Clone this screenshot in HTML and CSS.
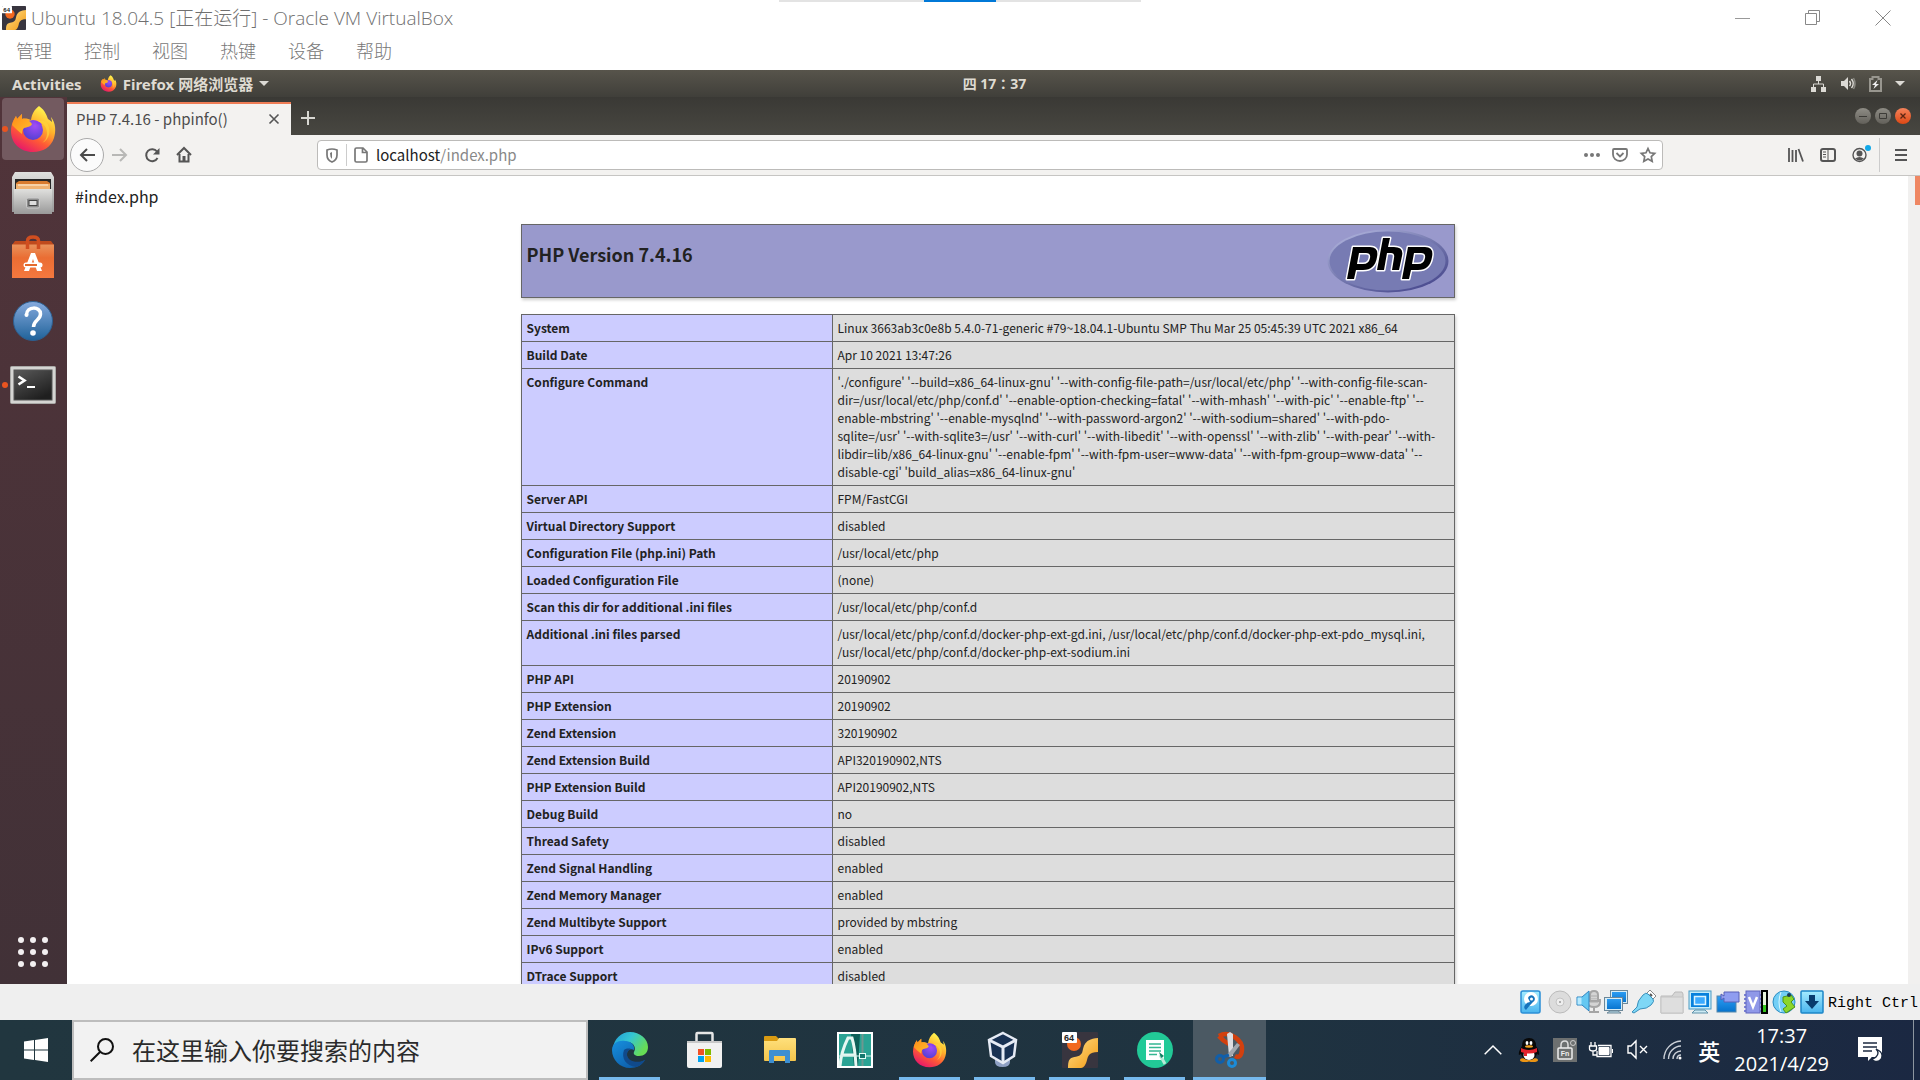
FILE: index.html
```html
<!DOCTYPE html>
<html lang="zh-CN">
<head>
<meta charset="utf-8">
<title>Ubuntu 18.04.5 [正在运行] - Oracle VM VirtualBox</title>
<link rel="stylesheet" href="styles.css">
</head>
<body>
<svg class="defs" width="0" height="0" aria-hidden="true">
  <defs>
    <linearGradient id="foxBody" x1="0.8" y1="0.1" x2="0.3" y2="1"><stop offset="0" stop-color="#fff44f"/><stop offset="0.35" stop-color="#ffb02b"/><stop offset="0.65" stop-color="#ff5a35"/><stop offset="1" stop-color="#e6176b"/></linearGradient>
    <linearGradient id="foxHead" x1="0" y1="0" x2="1" y2="1"><stop offset="0" stop-color="#ff8a16"/><stop offset="1" stop-color="#ffc02e"/></linearGradient>
    <radialGradient id="foxGlobe" cx="0.6" cy="0.3" r="0.8"><stop offset="0" stop-color="#a24cf5"/><stop offset="1" stop-color="#4a3fd0"/></radialGradient>
    <linearGradient id="metal" x1="0" y1="0" x2="0" y2="1"><stop offset="0" stop-color="#e0e0de"/><stop offset="1" stop-color="#999"/></linearGradient>
    <linearGradient id="bag" x1="0" y1="0" x2="0" y2="1"><stop offset="0" stop-color="#e9935c"/><stop offset="0.4" stop-color="#ea6d33"/><stop offset="1" stop-color="#f4783f"/></linearGradient>
    <linearGradient id="help" x1="0" y1="0" x2="0" y2="1"><stop offset="0" stop-color="#86aade"/><stop offset="1" stop-color="#1f6299"/></linearGradient>
    <linearGradient id="term" x1="0" y1="0" x2="0.6" y2="1"><stop offset="0" stop-color="#5a5a5a"/><stop offset="1" stop-color="#1f1f1f"/></linearGradient>
    <linearGradient id="blueScreen" x1="0" y1="0" x2="0" y2="1"><stop offset="0" stop-color="#2e9ff5"/><stop offset="1" stop-color="#0672cc"/></linearGradient>
    <linearGradient id="skyBox" x1="0" y1="0" x2="0" y2="1"><stop offset="0" stop-color="#a5ecff"/><stop offset="1" stop-color="#49b4ee"/></linearGradient>
    <linearGradient id="pipe" x1="0" y1="0" x2="1" y2="1"><stop offset="0" stop-color="#ffe08a"/><stop offset="1" stop-color="#f39a12"/></linearGradient>
    <linearGradient id="edgeTop" x1="0" y1="0" x2="1" y2="0.5"><stop offset="0" stop-color="#1f9ad8"/><stop offset="0.5" stop-color="#35c6d2"/><stop offset="1" stop-color="#67dd55"/></linearGradient>
    <linearGradient id="edgeBody" x1="0" y1="0" x2="0.8" y2="1"><stop offset="0" stop-color="#1790df"/><stop offset="1" stop-color="#0c59a4"/></linearGradient>
    <linearGradient id="folder" x1="0" y1="0" x2="0" y2="1"><stop offset="0" stop-color="#ffe07c"/><stop offset="1" stop-color="#f4c54b"/></linearGradient>
    <linearGradient id="phpRim" x1="0.1" y1="0" x2="0.9" y2="1"><stop offset="0" stop-color="#b4b8e0"/><stop offset="0.5" stop-color="#7377ad"/><stop offset="1" stop-color="#43438a"/></linearGradient>
    <symbol id="firefox" viewBox="0 0 46 48">
      <path d="M29 1c7 5 8 11 9 13c2 1 4 3 4 3c0-2-1-4-1-5c5 6 5 15 3 21c-3 9-11 14-21 14C10 47 1 38 1 26c0-7 3-12 5-15l1 3l5-5l0 5c3-1 7 0 9 1c1-6 3-10 8-14z" fill="url(#foxBody)"/>
      <path d="M27 17c7 0 10 6 10 11c0 5-2 8-5 10c8-3 10-15 4-21c-3-2-6-2-9 0z" fill="#ffd43b" opacity="0.7"/>
      <circle cx="23" cy="25" r="10" fill="url(#foxGlobe)"/>
      <path d="M2 20c1-4 3-7 4-9l1 3l5-5v5c4-1 7 1 10 5c-1 3-5 3-8 4c-2 2-2 4-2 6c-4-3-7-6-10-9z" fill="url(#foxHead)"/>
      <path d="M22 16c4-1 9 1 10 4l-5-1c-1-2-3-3-5-3z" fill="#8b3df0"/>
    </symbol>
    <symbol id="vm64" viewBox="0 0 36 36">
      <rect width="36" height="36" rx="1" fill="#38353f"/>
      <circle cx="12" cy="12" r="7" fill="#f2691f"/>
      <path d="M36 6v14c-9 0-10 4-11 8c-1 4-3 8-6 8H6c0-3 0-7 2-9c3-3 9-1 12-6c2-4 0-14 16-15z" fill="url(#pipe)"/>
      <rect x="0" y="0" width="15" height="11" rx="1" fill="#fff"/>
      <text x="7" y="9" font-size="9" font-weight="700" text-anchor="middle" fill="#222" font-family="Liberation Sans, sans-serif">64</text>
    </symbol>
    <g id="phpWord">
      <path fill-rule="evenodd" d="M25 18h17q9 0 7 10q-2 13-14 13h-7l-2 9h-7zM31 24l-2 11h6q6 0 7-6q1-5-4-5z"/>
      <path d="M55 9h7l-2 9h6q10 0 8 9l-3 14h-7l2-12q1-5-3-5h-4l-3 17h-7z"/>
      <path fill-rule="evenodd" d="M80 18h17q9 0 7 10q-2 13-14 13h-7l-2 9h-7zM86 24l-2 11h6q6 0 7-6q1-5-4-5z"/>
    </g>
  </defs>
</svg>

<div class="screen">
  <header class="vm-title">
    <svg class="vm-logo" viewBox="0 0 36 36"><use href="#vm64"/></svg>
    <h1 class="vm-name">Ubuntu 18.04.5 [正在运行] - Oracle VM VirtualBox</h1>
    <div class="vm-pin"><i></i><b></b><i></i></div>
    <div class="vm-controls">
      <button aria-label="最小化"><svg width="16" height="16"><path d="M0 8.500h15" stroke="#999" fill="none"/></svg></button>
      <button aria-label="还原"><svg width="16" height="16"><path d="M.5 3.500h11v11H.5zM3.500 3V.5h11v11H12" stroke="#888" fill="none"/></svg></button>
      <button aria-label="关闭"><svg width="16" height="16"><path d="M.5.5l15 15M15.500.5l-15 15" stroke="#888" fill="none"/></svg></button>
    </div>
  </header>
  <nav class="vm-menu">
    <button>管理</button><button>控制</button><button>视图</button><button>热键</button><button>设备</button><button>帮助</button>
  </nav>

  <div class="panel">
    <div class="panel-left">
      <button class="activities">Activities</button>
      <button class="app-menu"><svg width="17" height="17"><use href="#firefox"/></svg><span>Firefox 网络浏览器</span><svg width="10" height="6"><path d="M0 0h10L5 5z" fill="#dcdad5"/></svg></button>
    </div>
    <time class="panel-clock" lang="zh-TW">四 17：37</time>
    <div class="panel-right">
      <svg width="16" height="16" fill="#dcdad5"><path d="M5 0h5v5H5zM0 11h5v5H0zM10 11h5v5h-5z"/><path d="M7.500 5v3M2.500 11V8h10v3" stroke="#dcdad5" fill="none"/></svg>
      <svg width="16" height="16" fill="none"><path d="M1 5h3l4-4v13l-4-4H1z" fill="#dcdad5"/><path d="M9.500 5q2 2.500 0 5M11.500 3q3.500 4.500 0 9" stroke="#dcdad5" stroke-width="1.500"/><path d="M13.500 2q3 5.500 0 11" stroke="#888780" stroke-width="1.500"/></svg>
      <svg width="13" height="16" fill="none"><path d="M1 3h2.500V1h6v2H12v12H1z" stroke="#98968f" stroke-width="2"/><path d="M8.500 4L3 9h3l-1.500 4L10 8H7z" fill="#eee"/></svg>
      <svg width="10" height="6"><path d="M0 0h10L5 5z" fill="#dcdad5"/></svg>
    </div>
  </div>

  <div class="guest">
    <aside class="dock">
      <button class="dock-item active running" aria-label="Firefox"><svg width="46" height="48"><use href="#firefox"/></svg></button>
      <button class="dock-item" aria-label="文件"><svg width="42" height="44" viewBox="0 0 42 44"><path d="M3 1h36l3 5v35H0V6z" fill="url(#metal)"/><path d="M3 8h36v10H3z" fill="#262626"/><path d="M4 12l3-2h28l3 2v6H4z" fill="#d97b2f"/><path d="M4 13h34v5H4z" fill="#f0b272"/><path d="M6 14h30" stroke="#fff0dc"/><path d="M2 18h38v25H2z" fill="url(#metal)"/><rect x="14.500" y="27" width="13" height="10" rx="1.500" fill="#8c8c8c" stroke="#ccc"/><rect x="17" y="29.500" width="8" height="5" fill="#ddd" stroke="#444"/></svg></button>
      <button class="dock-item" aria-label="软件"><svg width="42" height="44" viewBox="0 0 42 44"><path d="M0 10l3-4h36l3 4z" fill="#bf4a1d"/><path d="M0 9.500h42V43H0z" fill="url(#bag)"/><path d="M15.500 14V6q0-4 5.500-4t5.500 4v8" fill="none" stroke="#d04e20" stroke-width="3.500"/><path d="M12 36l7-18h4l7 18h-5l-4-12-4 12z" fill="#fff"/><path d="M14 30h14" stroke="#fff" stroke-width="5" stroke-linecap="round"/><path d="M13 30h12" stroke="#e46a2d" stroke-width="2"/></svg></button>
      <button class="dock-item" aria-label="帮助"><svg width="42" height="42" viewBox="0 0 42 42"><circle cx="21" cy="21" r="19.500" fill="url(#help)" stroke="#2d5f90"/><path d="M14.500 15c0-9 14-9 14-1c0 6-7 6-7 13" fill="none" stroke="#fff" stroke-width="3.500"/><circle cx="14.500" cy="15" r="2" fill="#fff"/><circle cx="21" cy="33" r="2.800" fill="#fff"/></svg></button>
      <button class="dock-item running" aria-label="终端"><svg width="46" height="38" viewBox="0 0 46 38"><rect x=".5" y=".5" width="45" height="37" rx="1" fill="#d5d5d3" stroke="#a9a9a7"/><rect x="4" y="4" width="38" height="30" fill="url(#term)" stroke="#555"/><path d="M8.500 10.500l6 4-6 4" fill="none" stroke="#fff" stroke-width="2.600"/><path d="M17 21h8" stroke="#fff" stroke-width="2"/></svg></button>
      <button class="dock-grid" aria-label="显示应用程序"><svg width="30" height="30" fill="#f3f0f1"><circle cx="3" cy="3" r="3"/><circle cx="15" cy="3" r="3"/><circle cx="27" cy="3" r="3"/><circle cx="3" cy="15" r="3"/><circle cx="15" cy="15" r="3"/><circle cx="27" cy="15" r="3"/><circle cx="3" cy="27" r="3"/><circle cx="15" cy="27" r="3"/><circle cx="27" cy="27" r="3"/></svg></button>
    </aside>

    <section class="browser">
      <div class="tabs">
        <div class="tab"><span>PHP 7.4.16 - phpinfo()</span><button aria-label="关闭标签页"><svg width="12" height="12"><path d="M1.500 1.500l9 9M10.500 1.500l-9 9" stroke="#555" stroke-width="1.600"/></svg></button></div>
        <button class="new-tab" aria-label="新建标签页"><svg width="14" height="14"><path d="M7 0v14M0 7h14" stroke="#d8d7d2" stroke-width="2"/></svg></button>
        <div class="wm">
          <button aria-label="最小化"><svg width="8" height="8"><path d="M0 4.500h8" stroke="#3c3b37"/></svg></button>
          <button aria-label="最大化"><svg width="8" height="8"><path d="M.5 1.500h7v5h-7z" stroke="#3c3b37" fill="none"/></svg></button>
          <button class="wm-close" aria-label="关闭"><svg width="8" height="8"><path d="M1.500 1.500l5 5M6.500 1.500l-5 5" stroke="#5b2512" stroke-width="1.300"/></svg></button>
        </div>
      </div>
      <div class="toolbar">
        <div class="nav">
          <button class="back" aria-label="后退"><svg width="16" height="14" fill="none"><path d="M8 1L2 7l6 6M2 7h14" stroke="#4b4b4b" stroke-width="2"/></svg></button>
          <button aria-label="前进"><svg width="16" height="14" fill="none"><path d="M8 1l6 6-6 6M14 7H0" stroke="#b8b8b6" stroke-width="2"/></svg></button>
          <button aria-label="刷新"><svg width="16" height="16" fill="none"><path d="M13 4.500A6 6 0 1 0 13.500 11" stroke="#555" stroke-width="2"/><path d="M15.500 1v6.500H9z" fill="#555"/></svg></button>
          <button aria-label="主页"><svg width="16" height="16" fill="none"><path d="M1 8l7-7 7 7" stroke="#555" stroke-width="2"/><path d="M3.500 7v7.500h9V7" stroke="#555" stroke-width="2"/><path d="M6.500 9h3v5h-3z" fill="#555"/></svg></button>
        </div>
        <div class="url">
          <svg width="12" height="15" fill="none"><path d="M1 2q5-2 10 0v5q0 5-5 7q-5-2-5-7z" stroke="#777" stroke-width="1.700"/><path d="M6 4v7q-2-2-2-6z" fill="#777"/></svg>
          <i class="url-line"></i>
          <svg width="14" height="16" fill="none"><path d="M2.500 1h6.500l4 4v8.500q0 1.500-1.500 1.500h-9q-1.500 0-1.500-1.500v-11q0-1.500 1.500-1.500zM8.500 1v4.500H13" stroke="#777" stroke-width="1.700"/></svg>
          <span class="url-text" role="textbox" aria-label="地址">localhost<span>/index.php</span></span>
          <button aria-label="页面操作"><svg width="16" height="4" fill="#777"><circle cx="2" cy="2" r="2"/><circle cx="8" cy="2" r="2"/><circle cx="14" cy="2" r="2"/></svg></button>
          <button aria-label="Pocket"><svg width="16" height="14" fill="none" stroke="#777" stroke-width="1.800"><path d="M2 1h12q1 0 1 1v4.500a7 6.500 0 0 1-14 0V2q0-1 1-1z"/><path d="M4.500 5L8 8.500 11.500 5"/></svg></button>
          <button aria-label="书签"><svg width="16" height="16" fill="none" stroke="#777" stroke-width="1.700"><path d="M8 1.500l2 4.300 4.700.6-3.400 3.200.9 4.700L8 12l-4.200 2.300.9-4.700L1.300 6.400 6 5.800z"/></svg></button>
        </div>
        <div class="tools">
          <button aria-label="书签库"><svg width="16" height="14" fill="none" stroke="#555"><path d="M1 0v14M4.500 2v12M8 2v12" stroke-width="1.800"/><path d="M10.500 1l4.500 12.500" stroke-width="1.800"/></svg></button>
          <button aria-label="侧栏"><svg width="16" height="14" fill="none" stroke="#555"><rect x="1" y="1" width="14" height="12" rx="2" stroke-width="2"/><path d="M8 1v12M3 4h3M3 6.500h3M3 9h3"/></svg></button>
          <button class="account" aria-label="账户"><svg width="16" height="16" fill="none"><circle cx="7.500" cy="8" r="6.500" stroke="#555" stroke-width="1.400"/><circle cx="7.500" cy="6.500" r="3" fill="#555"/><path d="M3 11.500q4.500-3 9 0q-4.500 4-9 0z" fill="#555"/></svg><i></i></button>
          <i class="tool-line"></i>
          <button aria-label="菜单"><svg width="12" height="14"><path d="M0 2h12M0 7h12M0 12h12" stroke="#555" stroke-width="2"/></svg></button>
        </div>
      </div>

      <div class="viewport">
        <main class="page">
          <p class="note">#index.php</p>
          <div class="version">
            <h2>PHP Version 7.4.16</h2>
            <svg width="122" height="64" viewBox="0 0 122 64" role="img" aria-label="PHP logo">
              <ellipse cx="61" cy="32" rx="60.500" ry="31.500" fill="url(#phpRim)"/>
              <ellipse cx="60.500" cy="32" rx="58" ry="29.500" fill="#777bb3"/>
              <use href="#phpWord" x="1" stroke="#fff" stroke-width="3" stroke-linejoin="round"/>
              <use href="#phpWord" x="1"/>
            </svg>
          </div>
          <table class="info">
            <tr><th scope="row">System</th><td>Linux 3663ab3c0e8b 5.4.0-71-generic #79~18.04.1-Ubuntu SMP Thu Mar 25 05:45:39 UTC 2021 x86_64</td></tr>
            <tr><th scope="row">Build Date</th><td>Apr 10 2021 13:47:26</td></tr>
            <tr><th scope="row">Configure Command</th><td>'./configure' '--build=x86_64-linux-gnu' '--with-config-file-path=/usr/local/etc/php' '--with-config-file-scan-<br>dir=/usr/local/etc/php/conf.d' '--enable-option-checking=fatal' '--with-mhash' '--with-pic' '--enable-ftp' '--<br>enable-mbstring' '--enable-mysqlnd' '--with-password-argon2' '--with-sodium=shared' '--with-pdo-<br>sqlite=/usr' '--with-sqlite3=/usr' '--with-curl' '--with-libedit' '--with-openssl' '--with-zlib' '--with-pear' '--with-<br>libdir=lib/x86_64-linux-gnu' '--enable-fpm' '--with-fpm-user=www-data' '--with-fpm-group=www-data' '--<br>disable-cgi' 'build_alias=x86_64-linux-gnu'</td></tr>
            <tr><th scope="row">Server API</th><td>FPM/FastCGI</td></tr>
            <tr><th scope="row">Virtual Directory Support</th><td>disabled</td></tr>
            <tr><th scope="row">Configuration File (php.ini) Path</th><td>/usr/local/etc/php</td></tr>
            <tr><th scope="row">Loaded Configuration File</th><td>(none)</td></tr>
            <tr><th scope="row">Scan this dir for additional .ini files</th><td>/usr/local/etc/php/conf.d</td></tr>
            <tr><th scope="row">Additional .ini files parsed</th><td>/usr/local/etc/php/conf.d/docker-php-ext-gd.ini, /usr/local/etc/php/conf.d/docker-php-ext-pdo_mysql.ini,<br>/usr/local/etc/php/conf.d/docker-php-ext-sodium.ini</td></tr>
            <tr><th scope="row">PHP API</th><td>20190902</td></tr>
            <tr><th scope="row">PHP Extension</th><td>20190902</td></tr>
            <tr><th scope="row">Zend Extension</th><td>320190902</td></tr>
            <tr><th scope="row">Zend Extension Build</th><td>API320190902,NTS</td></tr>
            <tr><th scope="row">PHP Extension Build</th><td>API20190902,NTS</td></tr>
            <tr><th scope="row">Debug Build</th><td>no</td></tr>
            <tr><th scope="row">Thread Safety</th><td>disabled</td></tr>
            <tr><th scope="row">Zend Signal Handling</th><td>enabled</td></tr>
            <tr><th scope="row">Zend Memory Manager</th><td>enabled</td></tr>
            <tr><th scope="row">Zend Multibyte Support</th><td>provided by mbstring</td></tr>
            <tr><th scope="row">IPv6 Support</th><td>enabled</td></tr>
            <tr><th scope="row">DTrace Support</th><td>disabled</td></tr>
          </table>
        </main>
        <div class="scroll"><i></i></div>
      </div>
    </section>
  </div>

  <footer class="vm-status">
    <svg width="24" height="24" viewBox="0 0 24 24"><rect x="1" y="1" width="19" height="22" rx="2" fill="url(#skyBox)" stroke="#2b8fd6" stroke-width="1.500"/><circle cx="11" cy="9" r="7" fill="#fff"/><path d="M8 8a3.500 3.500 0 1 1 5 4q-3 3-7 8-3-2-1-5 2-3 5-3" fill="#1674bd"/><circle cx="11.500" cy="9" r="1.500" fill="#fff"/></svg>
    <svg width="24" height="24" viewBox="0 0 24 24"><circle cx="12" cy="12" r="11" fill="#dcdcdc" stroke="#bbb"/><circle cx="12" cy="12" r="4" fill="#eee" stroke="#c4c4c4"/><circle cx="12" cy="12" r="1" fill="#999"/></svg>
    <svg width="24" height="24" viewBox="0 0 24 24"><path d="M14 5q0-4 4-4t4 4v6h-8zM11 9v3q1 5 7 5t6-5V9M18 17v5m-5 0h10" fill="#d4d4d4" stroke="#a5a5a5" stroke-width="2"/><path d="M14 6h8M14 9h8M14 12h8" stroke="#aaa"/><path d="M1 7h5l7-6v20l-7-6H1z" fill="#65c8f2" stroke="#2f84c2"/><path d="M1.500 7.500h4v7h-4z" fill="#b9eaff"/></svg>
    <svg width="24" height="24" viewBox="0 0 24 24"><rect x="7" y="1" width="16" height="12" fill="url(#blueScreen)" stroke="#d7edf7" stroke-width="2"/><rect x="6.500" y=".5" width="17" height="13" fill="none" stroke="#6c8798"/><rect x="2" y="8" width="16" height="12" fill="url(#blueScreen)" stroke="#d7edf7" stroke-width="2"/><rect x=".5" y="7.500" width="18" height="13" fill="none" stroke="#6c8798"/><path d="M3 23h14l-3-2H6z" fill="#b9dbe8" stroke="#6c8798"/></svg>
    <svg width="24" height="24" viewBox="0 0 24 24"><path d="M14 4l4-4 6 6-5 5z" fill="#fff" stroke="#888"/><path d="M18 4l2 2" stroke="#555" stroke-width="2"/><path d="M11 5q3-3 5-1l5 5q2 2-2 6q-4 4-11 4l-6 4-2-1 5-5q0-6 6-12z" fill="#7ed7f6" stroke="#3a8fbb"/></svg>
    <svg width="24" height="24" viewBox="0 0 24 24"><path d="M1 6h11l3-4h7l1 2v19H1z" fill="#d6d6d6" stroke="#bababa"/><path d="M1 7h22v16H1z" fill="#dedede" stroke="#c4c4c4"/></svg>
    <svg width="24" height="24" viewBox="0 0 24 24"><rect x="1" y="1" width="22" height="18" fill="#c6ecfa" stroke="#4c9bc4"/><rect x="3" y="3" width="18" height="14" fill="#0781dd"/><rect x="6.500" y="6.500" width="11" height="8" fill="#3baaff" stroke="#d9f4ff" stroke-width="1.500"/><path d="M4 23h16l-3-3H7z" fill="#cdeaf4" stroke="#5e91a9"/></svg>
    <svg width="24" height="24" viewBox="0 0 24 24"><rect x="1" y="6" width="19" height="16" fill="url(#blueScreen)" stroke="#5588ab"/><path d="M5 4l3 2V2h15v10H8V8l-3 2z" fill="#8f9df0" stroke="#5960b7"/></svg>
    <svg width="24" height="24" viewBox="0 0 24 24"><path d="M0 5h18M0 9h18M0 13h18M0 17h18M0 21h18" stroke="#7d83d5" stroke-width="2"/><rect x="2" y="1" width="14" height="22" fill="#8f98e8" stroke="#6067bd"/><path d="M5 7l4 10 4-10" fill="none" stroke="#fff" stroke-width="2.500"/><rect x="18" y="1" width="5" height="22" fill="#e8f4dc" stroke="#000" stroke-width="2"/><path d="M19 15h3v7h-3z" fill="#34c51b"/></svg>
    <svg width="24" height="24" viewBox="0 0 24 24"><circle cx="12" cy="12" r="11" fill="#73cff6" stroke="#2a8cc3"/><path d="M9 2q-4 10 0 20" fill="none" stroke="#d6f6ff"/><path d="M11 7l8-2 3 4-3 3 4 5-9 6-3-4 4-3-4-4z" fill="#8cd629" stroke="#4d9318"/><circle cx="17" cy="5" r="2" fill="#173d5a"/></svg>
    <svg width="24" height="24" viewBox="0 0 24 24"><rect x="1" y="1" width="22" height="22" rx="1" fill="url(#skyBox)" stroke="#1c86c8" stroke-width="1.500"/><path d="M9 5h6v6h4l-7 8-7-8h4z" fill="#083c6e"/></svg>
    <span>Right Ctrl</span>
  </footer>

  <footer class="taskbar">
    <button class="start" aria-label="开始"><svg width="24" height="24" viewBox="0 0 24 24" fill="#fff"><path d="M0 3.500l10-1.400v9.400H0zM11 2l13-2v11.500H11zM0 12.500h10V22L0 20.500zM11 12.500h13V24l-13-2z"/></svg></button>
    <label class="search"><svg width="24" height="24" fill="none" stroke="#111" stroke-width="2"><circle cx="15.500" cy="8.500" r="7.500"/><path d="M10 14L.7 23.300"/></svg><input type="text" placeholder="在这里输入你要搜索的内容" aria-label="搜索"></label>
    <div class="apps">
      <button class="open" aria-label="Edge"><svg width="36" height="36" viewBox="0 0 36 36"><path d="M1 16C2 7 9 0 18 0c10 0 18 7 18 15c0 6-4 9-9 9c-4 0-6-2-5-4c2-3 1-9-6-10c-7-1-12 2-15 6z" fill="url(#edgeTop)"/><path d="M0 18c0-7 7-10 13-9c6 0 10 4 9 9c-4-2-8 1-7 6c1 6 9 9 18 4c-3 5-8 8-15 8C8 36 0 28 0 18z" fill="url(#edgeBody)"/><path d="M12 18c-3 8 2 16 12 17c4-1 7-4 9-7c-9 4-17 1-18-5c0-3 1-5 4-6c-3-1-6 0-7 1z" fill="#104a8b"/></svg></button>
      <button aria-label="Microsoft Store"><svg width="36" height="36" viewBox="0 0 36 36"><path d="M9.500 11V2q0-1 1-1h14q1 0 1 1v9" fill="none" stroke="#e6e6e6" stroke-width="2.500"/><path d="M0 9h35v25q0 2-2 2H2q-2 0-2-2z" fill="#f1f1f1"/><path d="M0 9h35v2H0z" fill="#c8c8c8"/><path d="M11 17h6v6h-6z" fill="#f05125"/><path d="M18 17h6v6h-6z" fill="#7fba00"/><path d="M11 24h6v6h-6z" fill="#00a4ef"/><path d="M18 24h6v6h-6z" fill="#ffb900"/></svg></button>
      <button aria-label="文件资源管理器"><svg width="32" height="28" viewBox="0 0 32 28"><path d="M0 1q0-1 1-1h11l3 3v4H0z" fill="#d99b12"/><path d="M0 5h13l2-3h16q1 0 1 1v21q0 1-1 1H1q-1 0-1-1z" fill="url(#folder)"/><path d="M5 27V15q0-1 1-1h19q1 0 1 1v12h-5v-7H10v7z" fill="#3d8fd2"/></svg></button>
      <button aria-label="Autodesk"><svg width="36" height="36" viewBox="0 0 36 36"><rect x="1" y="1" width="34" height="34" fill="#2aa394" stroke="#fff" stroke-width="2"/><path d="M14 2h9l-2 32h-4z" fill="#0d5f58"/><path d="M3 34q1-14 8-28h4q3 10 4 28M5 23h13" fill="none" stroke="#e6f7f2" stroke-width="3"/><path d="M2 24h32" stroke="#d5efe9"/><path d="M25.500 2v32" stroke="#6d9790" stroke-width="2"/><rect x="22.500" y="21.500" width="6" height="5" fill="#15796f" stroke="#e5fff8"/></svg></button>
      <button class="open" aria-label="Firefox"><svg width="35" height="36"><use href="#firefox"/></svg></button>
      <button class="open" aria-label="VirtualBox"><svg width="36" height="36" viewBox="0 0 36 36"><path d="M8 27q8 4 15 0v3q0 5-7.500 5t-7.500-5z" fill="#8ea0c4"/><path d="M16 1l13 7-2 16-11 7-12-7L2 8z" fill="#183153" stroke="#e6ebf5" stroke-width="2.500"/><path d="M2 8l14 7 13-7M16 15v16" fill="none" stroke="#e6ebf5" stroke-width="3"/></svg></button>
      <button class="open" aria-label="虚拟机"><svg width="36" height="36"><use href="#vm64"/></svg></button>
      <button class="open" aria-label="文档"><svg width="36" height="36" viewBox="0 0 36 36"><circle cx="18" cy="18" r="18" fill="#22c997"/><path d="M9 8h18v20H9z" fill="#fff"/><path d="M12 12h12M12 15.500h12M12 19h12M12 22.500h8" stroke="#35b792" stroke-width="1.500"/><path d="M23 23l5 9" fill="none" stroke="#b9e9d8" stroke-width="3"/><path d="M22 20l5 4-3 2z" fill="#128263"/></svg></button>
      <button class="open current" aria-label="截图工具"><svg width="30" height="36" viewBox="0 0 30 36"><path d="M4 4C14-2 28 8 27 18q-1 9-7 6M4 4q4 5 10 8" fill="none" stroke="#d2400e" stroke-width="4.500"/><path d="M12 2l3-2 3 2v22h-4z" fill="#dcdde0"/><path d="M10 25L22 11l3 2-9 12z" fill="#a3a8ae"/><circle cx="5" cy="27" r="3.500" fill="none" stroke="#115faa" stroke-width="3"/><circle cx="17" cy="31" r="3.500" fill="none" stroke="#1b8bd8" stroke-width="3"/><path d="M8 25l6-2" stroke="#115faa" stroke-width="3"/></svg></button>
    </div>
    <div class="tray">
      <div class="tray-icons">
        <svg width="18" height="10" fill="none" stroke="#fff" stroke-width="1.500"><path d="M.7 9.300L9 1l8.300 8.300"/></svg>
        <svg width="20" height="24" viewBox="0 0 20 24"><ellipse cx="6" cy="22" rx="5" ry="2" fill="#eb9414"/><ellipse cx="14" cy="22" rx="5" ry="2" fill="#eb9414"/><path d="M10 0q7 0 7 8q4 6 3 9l-2-1q-2 6-8 6t-8-6l-2 1q-1-3 3-9q0-8 7-8z" fill="#080808"/><ellipse cx="10" cy="17" rx="5.500" ry="5" fill="#fff"/><path d="M2 10q8 4 16 0v4q-8 3-16 0zM5 13h3v5H5z" fill="#e1232c"/><ellipse cx="8" cy="5" rx="1.400" ry="2" fill="#fff"/><ellipse cx="12" cy="5" rx="1.400" ry="2" fill="#fff"/><ellipse cx="10" cy="8.500" rx="4" ry="1.200" fill="#f0a020"/></svg>
        <svg width="24" height="24" viewBox="0 0 24 24"><rect width="24" height="24" fill="#6d7070"/><path d="M8 10V7q0-4 4-4 3 0 3 4v3" fill="none" stroke="#ddd" stroke-width="1.500"/><rect x="5" y="10" width="14" height="11" rx="1" fill="none" stroke="#eee" stroke-width="1.500"/><text x="12" y="18" font-size="7" font-weight="700" text-anchor="middle" fill="#eee" font-family="Liberation Sans, sans-serif">Fn</text><circle cx="20" cy="5" r="2.500" fill="none" stroke="#ccc"/></svg>
        <svg width="24" height="16" viewBox="0 0 24 16" fill="none" stroke="#fff"><path d="M2 0v4M6 0v4M.5 4h7v3q0 2-3.500 2t-3.500-2zM4 9v4h4" stroke-width="1.300"/><path d="M9 3.500h13v11H8V9" stroke-width="1.300"/><path d="M10 5.500h10v7H10z" fill="#fff"/><path d="M23.500 7v4"/></svg>
        <svg width="21" height="20" viewBox="0 0 21 20" fill="none" stroke="#fff" stroke-width="1.400"><path d="M1 6h3l5-5v17l-5-5H1zM13 6l7 7M20 6l-7 7"/></svg>
        <svg width="20" height="20" viewBox="0 0 20 20" fill="none" stroke="#ccd1d8" stroke-width="1.400"><path d="M1 19A18 18 0 0 1 18 1M5.500 19A13 13 0 0 1 18 6M10 19a8 8 0 0 1 8-8M14 19q0-4 4-4"/><circle cx="17" cy="18" r="1.500" fill="#fff" stroke="none"/></svg>
        <span class="ime">英</span>
      </div>
      <time class="clock"><span>17:37</span><span>2021/4/29</span></time>
      <svg class="notice" width="26" height="26" viewBox="0 0 26 26"><path d="M0 0h24v20H14l-4 4v-4H0z" fill="#fff"/><path d="M5 6h14M5 10h14M5 14h9" stroke="#1c2a40" stroke-width="1.500"/><path d="M18 12q4 4 0 8-2 2-4 1.500 1 3 5 3 5-1 5-6 0-4-6-6.500z" fill="#fff" stroke="#1c2a40" stroke-width="1.300"/></svg>
      <i class="peek"></i>
    </div>
  </footer>
</div>
</body>
</html>
```
FILE: styles.css
```css
* { box-sizing: border-box; }
html, body { height: 100%; margin: 0; }
body {
  overflow: hidden;
  font-family: "Noto Sans CJK SC", sans-serif;
  background: #fff;
}
button { border: 0; padding: 0; background: none; font: inherit; color: inherit; display: flex; align-items: center; justify-content: center; }
svg { display: block; flex: none; overflow: visible; }
i, b { display: block; }
.defs { position: absolute; }
.screen { height: 100vh; display: flex; flex-direction: column; }

/* host window */
.vm-title { position: relative; height: 35px; flex: none; display: flex; align-items: center; gap: 5px; padding-left: 2px; }
.vm-logo { width: 24px; height: 24px; }
.vm-name { margin: 0; flex: 1; font: 300 19px/24px "Open Sans", "Noto Sans CJK SC", sans-serif; color: #707070; white-space: nowrap; }
.vm-pin { position: absolute; top: 0; left: 0; right: 0; display: flex; justify-content: center; }
.vm-pin i { width: 145px; height: 2px; background: #e3e3e3; }
.vm-pin b { width: 72px; height: 2px; background: #0078d7; }
.vm-controls { display: flex; gap: 54px; padding-right: 29px; }
.vm-menu { height: 35px; flex: none; display: flex; gap: 32px; padding: 0 16px 5px; font-size: 18px; font-weight: 300; line-height: 30px; color: #777; }

/* guest top panel */
.panel { height: 27px; flex: none; display: grid; grid-template-columns: 1fr auto 1fr; align-items: center; padding: 0 15px 0 12px; background: linear-gradient(#57544b, #403f3a); color: #dfdbd2; font: 700 15px/26px "Noto Sans", "Noto Sans CJK SC", sans-serif; }
.panel-left { display: flex; gap: 18px; }
.app-menu { gap: 6px; }
.panel-clock { padding-left: 72px; font-family: "Noto Sans", "Noto Sans CJK TC", sans-serif; font-size: 14px; }
.panel-right { display: flex; align-items: center; justify-content: flex-end; gap: 13px; }

.guest { flex: 1; min-height: 0; display: flex; }
.dock { width: 67px; flex: none; display: flex; flex-direction: column; gap: 2px; padding: 1px 3px 17px 2px; background: linear-gradient(#51343a, #413137); }
.dock-item { position: relative; height: 62px; border-radius: 4px; }
.dock-item.active { background: #735a60; }
.dock-item.running::before { content: ""; position: absolute; left: 0; top: 28px; width: 6px; height: 6px; border-radius: 50%; background: #e95420; }
.dock-grid { margin-top: auto; }

/* browser */
.browser { flex: 1; min-width: 0; display: flex; flex-direction: column; }
.tabs { height: 38px; flex: none; display: flex; align-items: flex-end; background: linear-gradient(#3a3935, #484741); }
.tab { width: 224px; height: 33px; display: flex; align-items: center; justify-content: space-between; padding: 0 11px 2px 9px; border-top: 2px solid #ee7c55; background: #f3f2f0; color: #4c4c4c; font-size: 15px; }
.new-tab { height: 33px; margin-left: 10px; padding-bottom: 2px; }
.wm { margin-left: auto; display: flex; gap: 4px; padding: 0 9px 11px 0; }
.wm button { width: 16px; height: 16px; border-radius: 50%; background: linear-gradient(#8f8d86, #62605a); }
.wm .wm-close { background: linear-gradient(#f5835b, #dd4814); }
.toolbar { height: 41px; flex: none; display: flex; align-items: center; padding: 0 13px 0 3px; background: #f3f2f0; border-bottom: 1px solid #c6c5c3; }
.nav { width: 247px; display: flex; align-items: center; gap: 16px; }
.nav .back { width: 34px; height: 34px; margin-right: -8px; border: 1px solid #aaa; border-radius: 50%; background: #fbfbfb; }
.url { flex: 1; height: 30px; display: flex; align-items: center; gap: 12px; padding: 0 6px 0 8px; border: 1px solid #bcbbb9; border-radius: 4px; background: #fff; }
.url-line { width: 1px; height: 22px; margin: 0 -5px 0 -4px; background: #ccc; }
.url-text { flex: 1; margin-left: -4px; font-size: 15px; line-height: 24px; color: #222; }
.url-text span { color: #888; }
.tools { width: 244px; display: flex; align-items: center; justify-content: flex-end; gap: 16px; }
.account { position: relative; }
.account i { position: absolute; top: -2px; right: -3px; width: 6px; height: 6px; border-radius: 50%; background: #12a8e8; }
.tool-line { width: 1px; height: 34px; margin: 0 -1px 0 -5px; background: #ccc; }

.viewport { flex: 1; min-height: 0; display: flex; background: #fff; }
.page { flex: 1; overflow: hidden; padding: 8px; color: #222; }
.scroll { width: 12px; background: #f1f0ef; }
.scroll i { width: 5px; height: 29px; margin-left: auto; background: #ef8763; }
.note { margin: 0 0 16px; font-size: 16px; line-height: 24px; }
.version, .info { width: 934px; margin: 0 auto; border: 1px solid #666; box-shadow: 1px 2px 3px #ccc; }
.version { height: 74px; display: flex; align-items: flex-start; justify-content: space-between; padding: 4px 5px; background: #9999cc; }
.version h2 { margin: 11px 0 0; font-size: 18px; line-height: 28px; }
.info { margin-top: 16px; border-collapse: collapse; table-layout: fixed; font-size: 12px; line-height: 18px; }
.info th, .info td { border: 1px solid #666; padding: 4px 5px; text-align: left; vertical-align: top; }
.info th { width: 311px; background: #ccccff; }
.info td { background: #ddd; white-space: nowrap; }

/* virtual machine status bar */
.vm-status { height: 36px; flex: none; display: flex; align-items: center; justify-content: flex-end; gap: 4px; padding-right: 2px; background: #efefef; font: 15px/24px "Liberation Mono", monospace; color: #000; }
.vm-status span { padding-top: 3px; }

/* host taskbar */
.taskbar { height: 60px; flex: none; display: flex; background: linear-gradient(90deg, #21363f, #1f3340 65%, #1b2842); color: #fff; }
.start { width: 72px; }
.search { width: 516px; display: flex; align-items: center; gap: 18px; padding: 0 16px; border: 2px solid #bdbdbd; background: #f2f2f2; }
.search input { flex: 1; min-width: 0; border: 0; padding: 0; background: none; font: 24px/36px "Noto Sans CJK SC", sans-serif; }
.search input::placeholder { color: #2b2b2b; opacity: 1; }
.apps { display: flex; gap: 2px; padding-left: 5px; }
.apps button { position: relative; width: 73px; }
.apps .open::after { content: ""; position: absolute; left: 6px; right: 6px; bottom: 0; height: 3px; background: #76b9ed; }
.apps .current { background: #4b5963; }
.apps .current::after { left: 0; right: 0; }
.tray { margin-left: auto; display: flex; align-items: center; gap: 7px; padding-right: 6px; }
.tray-icons { display: grid; grid-template-columns: repeat(7, 36px); place-items: center; }
.ime { font-size: 22px; font-weight: 500; line-height: 32px; }
.clock { display: flex; flex-direction: column; align-items: center; font: 20px/28px "Open Sans", sans-serif; }
.notice { margin: 0 22px; }
.peek { width: 1px; height: 60px; background: #8d96a0; }
```
